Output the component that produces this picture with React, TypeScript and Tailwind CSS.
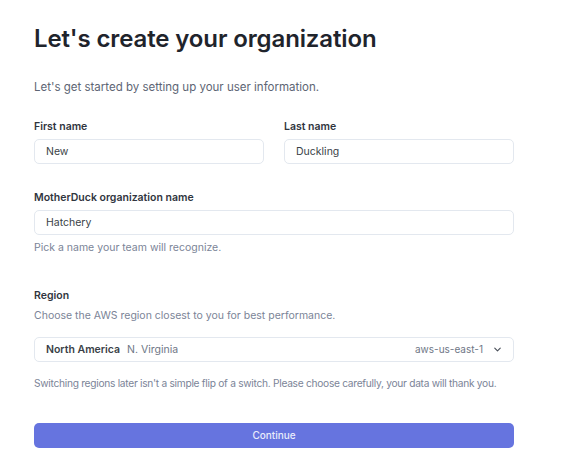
import { ChevronDown } from 'lucide-react';

type FieldProps = {
  label: string;
  value: string;
  hint?: string;
};

function Field({ label, value, hint }: FieldProps) {
  return (
    <div className="flex flex-col">
      <label className="text-[10.5px] font-semibold leading-[14px] text-[#30353e]">
        {label}
      </label>
      <div className="mt-[5px] flex h-[25px] items-center rounded-[5px] border border-[#e3e8ef] bg-white px-[11px] text-[10.5px] text-[#3a3f47]">
        {value}
      </div>
      {hint ? (
        <p className="mt-[6px] text-[10.5px] leading-[14px] text-[#7b8497]">{hint}</p>
      ) : null}
    </div>
  );
}

export default function App() {
  return (
    <div
      className="min-h-[470px] w-[563px] bg-white px-[34px] pt-[24px]"
      style={{ fontFamily: 'Inter, "Noto Sans", sans-serif' }}
    >
      <h1 className="text-[24px] font-semibold leading-[30px] tracking-[-0.005em] text-[#1f242c]">
        Let's create your organization
      </h1>
      <p className="mt-[25px] text-[11.5px] leading-[16px] text-[#5d6574]">
        Let's get started by setting up your user information.
      </p>

      <div className="mt-[25px] w-[480px]">
        <div className="grid grid-cols-2 gap-[20px]">
          <Field label="First name" value="New" />
          <Field label="Last name" value="Duckling" />
        </div>

        <div className="mt-[27px]">
          <Field
            label="MotherDuck organization name"
            value="Hatchery"
            hint="Pick a name your team will recognize."
          />
        </div>

        <div className="mt-[34px] flex flex-col">
          <span className="text-[10.5px] font-semibold leading-[14px] text-[#30353e]">Region</span>
          <p className="mt-[6px] text-[10.5px] leading-[14px] text-[#7b8497]">
            Choose the AWS region closest to you for best performance.
          </p>
          <div className="mt-[14px] flex h-[25px] items-center rounded-[5px] border border-[#e3e8ef] bg-white pl-[11px] pr-[10px] text-[10.5px]">
            <span className="font-semibold text-[#3a3f47]">North America</span>
            <span className="ml-[7px] text-[#6f7786]">N. Virginia</span>
            <span className="ml-auto text-[10px] text-[#6f7786]">aws-us-east-1</span>
            <ChevronDown className="ml-[9px] h-[11px] w-[11px] text-[#4a505a]" strokeWidth={2.5} />
          </div>
          <p className="mt-[14px] whitespace-nowrap text-[10.2px] leading-[14px] tracking-[-0.28px] text-[#7b8497]">
            Switching regions later isn't a simple flip of a switch. Please choose carefully, your data will thank you.
          </p>
        </div>

        <button className="mt-[33px] flex h-[25px] w-full items-center justify-center rounded-[5px] bg-[#6674df] text-[10px] font-medium text-[#e9ecfb]">
          Continue
        </button>
      </div>
    </div>
  );
}
